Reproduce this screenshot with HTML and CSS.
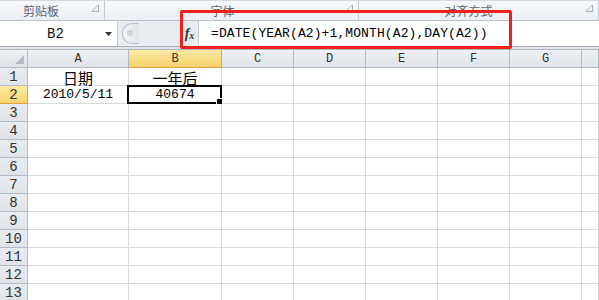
FILE: index.html
```html
<!DOCTYPE html>
<html lang="zh">
<head>
  <meta charset="UTF-8" />
  <title>Excel</title>
  <link rel="stylesheet" href="styles.css">
</head>
<body>

  <!-- 功能区分组标题 -->
  <div class="ribbon">
    <div class="group g1"><span>剪贴板</span><i class="launcher"></i></div>
    <div class="group g2"><span>字体</span><i class="launcher"></i></div>
    <div class="group g3"><span>对齐方式</span><i class="launcher"></i></div>
  </div>

  <!-- 编辑栏 -->
  <div class="formula-bar">
    <div class="name-box">
      <span class="name">B2</span>
      <svg class="drop" width="7" height="4" viewBox="0 0 7 4"><path d="M0 0h7L3.5 4z" fill="#333"/></svg>
    </div>
    <div class="splitter"><div class="knob"></div></div>
    <div class="fx"><i>f</i><i class="x">x</i></div>
    <div class="formula">=DATE(YEAR(A2)+1,MONTH(A2),DAY(A2))</div>
  </div>
  <div class="bar-gap"></div>

  <!-- 工作表 -->
  <div class="sheet">
    <div class="corner"><svg width="9" height="9" viewBox="0 0 9 9"><path d="M9 0v9H0z" fill="#b6bcc6"/></svg></div>
    <div class="col-head">A</div>
    <div class="col-head sel">B</div>
    <div class="col-head">C</div>
    <div class="col-head">D</div>
    <div class="col-head">E</div>
    <div class="col-head">F</div>
    <div class="col-head">G</div>
    <div class="col-head last"></div>
  </div>

  <div class="box"></div>

  <script>
    const sheet = document.querySelector('.sheet');
    const data = { 1: ['日期', '一年后'], 2: ['2010/5/11', '40674'] };

    for (let r = 1; r <= 13; r++) {
      const head = document.createElement('div');
      head.className = 'row-head' + (r === 2 ? ' sel' : '');
      head.textContent = r;
      sheet.appendChild(head);

      for (let c = 0; c < 8; c++) {
        const cell = document.createElement('div');
        cell.className = 'cell';
        const vals = data[r];
        if (vals && c < 2) {
          cell.textContent = vals[c];
          cell.classList.add(r === 1 ? 'cjk' : 'num');
        }
        if (r === 2 && c === 1) cell.classList.add('active');
        if (c === 7) cell.classList.add('last');
        sheet.appendChild(cell);
      }
    }
  </script>

</body>
</html>
```

FILE: styles.css
```css
body {
  margin: 0;
  width: 599px;
  height: 300px;
  overflow: hidden;
  background: #fff;
  font-family: "Liberation Mono", monospace;
  position: relative;
}

/* 功能区 */
.ribbon {
  display: flex;
  height: 19px;
  border-top: 1px solid #d5dae1;
  border-bottom: 1px solid #b9c0c9;
  background: linear-gradient(#f5f7fa, #eceff3);
}
.group {
  position: relative;
  display: flex;
  align-items: center;
  justify-content: center;
  border-right: 1px solid #c6ccd4;
  font-family: "Noto Sans CJK SC", sans-serif;
  font-size: 12px;
  color: #5f6670;
  box-sizing: border-box;
}
.g1 { width: 105px; padding-right: 22px; }
.g2 { width: 254px; padding-right: 18px; }
.g3 { width: 240px; padding-right: 20px; }
.launcher {
  position: absolute;
  right: 5px;
  top: 4px;
  width: 6px;
  height: 6px;
  border: 1px solid #aab1bb;
  border-width: 0 1px 1px 0;
  background: linear-gradient(135deg, transparent 45%, #b7bec7 50%, transparent 60%);
}

/* 编辑栏 */
.formula-bar {
  display: flex;
  height: 25px;
  border-bottom: 1px solid #a9b1bc;
  background: #e9ecf0;
}
.name-box {
  width: 118px;
  display: flex;
  align-items: center;
  background: #fff;
  border-right: 1px solid #c5cbd3;
  box-sizing: border-box;
}
.name {
  flex: 1;
  text-align: center;
  font-size: 14px;
  color: #111;
  padding-left: 6px;
}
.drop { margin-right: 5px; }
.splitter {
  width: 62px;
  display: flex;
  align-items: center;
}
.knob {
  width: 16px;
  height: 19px;
  margin-left: 4px;
  border: 1px solid #b7bec8;
  border-radius: 10px 0 0 10px;
  border-right: none;
  background: linear-gradient(90deg, #f3f4f6, #e2e5e9);
  position: relative;
}
.knob::after {
  content: "";
  position: absolute;
  left: 4px;
  top: 6px;
  width: 6px;
  height: 6px;
  border-radius: 50%;
  background: #cfd4da;
}
.fx {
  width: 17px;
  display: flex;
  align-items: center;
  justify-content: center;
  border-left: 1px solid #c5cbd3;
  border-right: 1px solid #c5cbd3;
  font-family: "Liberation Serif", serif;
  font-weight: bold;
  font-style: italic;
  font-size: 14px;
  color: #333;
}
.fx i { font-style: italic; }
.fx .x { font-size: 10px; margin-top: 4px; }
.formula {
  flex: 1;
  background: #fff;
  padding-left: 12px;
  font-size: 13px;
  line-height: 25px;
  color: #000;
  letter-spacing: 0.1px;
}
.bar-gap {
  height: 2px;
  background: #dfe3e8;
  border-bottom: 1px solid #aeb6c0;
}

/* 工作表 */
.sheet {
  display: grid;
  grid-template-columns: 28px 101px 93px repeat(5, 72px) 1fr;
  grid-auto-rows: 18px;
}
.sheet > div {
  box-sizing: border-box;
  border-right: 1px solid #d8d8d8;
  border-bottom: 1px solid #d8d8d8;
}
.corner, .col-head, .row-head {
  background: linear-gradient(#eef0f3, #dfe3e8);
  border-color: #b3bac4 !important;
  color: #333;
}
.corner {
  display: flex;
  align-items: flex-end;
  justify-content: flex-end;
  padding: 0 3px 3px 0;
}
.col-head {
  text-align: center;
  font-size: 12px;
  line-height: 18px;
}
.row-head {
  text-align: center;
  font-size: 14px;
  line-height: 18px;
  background: linear-gradient(#e8ebef, #e0e4e9);
}
.col-head.sel, .row-head.sel {
  background: linear-gradient(#fbe9a5, #f7d46d);
  border-color: #e2a23b !important;
}
.cell {
  text-align: center;
  line-height: 17px;
  color: #000;
}
.cjk {
  font-family: "Noto Sans CJK SC", sans-serif;
  font-size: 15px;
  line-height: 19px;
}
.num { font-size: 13px; }
.cell.active { position: relative; }
.cell.active::before {
  content: "";
  position: absolute;
  left: -2px;
  top: -1px;
  width: 95px;
  height: 19px;
  border: 2px solid #000;
  box-sizing: border-box;
}
.cell.active::after {
  content: "";
  position: absolute;
  right: -2px;
  bottom: -2px;
  width: 5px;
  height: 5px;
  background: #000;
  border: 1px solid #fff;
}

/* 红色标注框 */
.box {
  position: absolute;
  left: 180px;
  top: 10px;
  width: 332px;
  height: 39px;
  border: 3px solid #f0201c;
  border-radius: 2px;
  box-sizing: border-box;
}
```
